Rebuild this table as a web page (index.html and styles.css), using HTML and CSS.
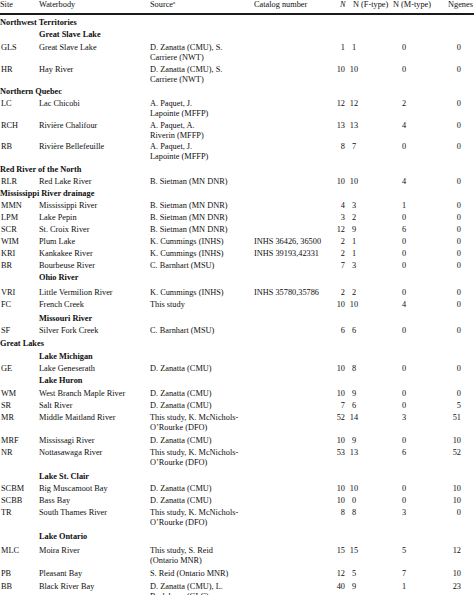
FILE: index.html
```html
<!DOCTYPE html>
<html>
<head>
<meta charset="utf-8">
<link rel="stylesheet" href="styles.css">
</head>
<body>
<table class="tbl">
<colgroup>
<col class="c-site"><col class="c-water"><col class="c-src"><col class="c-cat"><col class="c-n"><col class="c-f"><col class="c-m"><col class="c-g">
</colgroup>
<thead>
<tr>
<th class="h-site">Site</th><th class="h-water">Waterbody</th><th class="h-src">Source<sup>a</sup></th><th class="h-cat">Catalog number</th><th class="h-n"><i>N</i></th><th class="h-f">N (F-type)</th><th class="h-m">N (M-type)</th><th class="h-g">Ngenes</th>
</tr>
</thead>
<tbody>
<tr class="grp p3"><td colspan="8">Northwest Territories</td></tr>
<tr class="sub p2"><td></td><td colspan="7">Great Slave Lake</td></tr>
<tr class="p3"><td>GLS</td><td>Great Slave Lake</td><td>D. Zanatta (CMU), S.<br>Carriere (NWT)</td><td></td><td class="n">1</td><td class="f">1</td><td class="m">0</td><td class="g">0</td></tr>
<tr class="p2"><td>HR</td><td>Hay River</td><td>D. Zanatta (CMU), S.<br>Carriere (NWT)</td><td></td><td class="n">10</td><td class="f">10</td><td class="m">0</td><td class="g">0</td></tr>
<tr class="grp p2"><td colspan="8">Northern Quebec</td></tr>
<tr class="p2"><td>LC</td><td>Lac Chicobi</td><td>A. Paquet, J.<br>Lapointe (MFFP)</td><td></td><td class="n">12</td><td class="f">12</td><td class="m">2</td><td class="g">0</td></tr>
<tr class="p2"><td>RCH</td><td>Rivière Chalifour</td><td>A. Paquet, A.<br>Riverin (MFFP)</td><td></td><td class="n">13</td><td class="f">13</td><td class="m">4</td><td class="g">0</td></tr>
<tr class="p1"><td>RB</td><td>Rivière Bellefeuille</td><td>A. Paquet, J.<br>Lapointe (MFFP)</td><td></td><td class="n">8</td><td class="f">7</td><td class="m">0</td><td class="g">0</td></tr>
<tr class="grp p3"><td colspan="8">Red River of the North</td></tr>
<tr class="p2"><td>RLR</td><td>Red Lake River</td><td>B. Sietman (MN DNR)</td><td></td><td class="n">10</td><td class="f">10</td><td class="m">4</td><td class="g">0</td></tr>
<tr class="grp p2"><td colspan="8">Mississippi River drainage</td></tr>
<tr class="p2"><td>MMN</td><td>Mississippi River</td><td>B. Sietman (MN DNR)</td><td></td><td class="n">4</td><td class="f">3</td><td class="m">1</td><td class="g">0</td></tr>
<tr class="p2"><td>LPM</td><td>Lake Pepin</td><td>B. Sietman (MN DNR)</td><td></td><td class="n">3</td><td class="f">2</td><td class="m">0</td><td class="g">0</td></tr>
<tr class="p2"><td>SCR</td><td>St. Croix River</td><td>B. Sietman (MN DNR)</td><td></td><td class="n">12</td><td class="f">9</td><td class="m">6</td><td class="g">0</td></tr>
<tr class="p2"><td>WIM</td><td>Plum Lake</td><td>K. Cummings (INHS)</td><td>INHS 36426, 36500</td><td class="n">2</td><td class="f">1</td><td class="m">0</td><td class="g">0</td></tr>
<tr class="p2"><td>KRI</td><td>Kankakee River</td><td>K. Cummings (INHS)</td><td>INHS 39193,42331</td><td class="n">2</td><td class="f">1</td><td class="m">0</td><td class="g">0</td></tr>
<tr class="p2"><td>BR</td><td>Bourbeuse River</td><td>C. Barnhart (MSU)</td><td></td><td class="n">7</td><td class="f">3</td><td class="m">0</td><td class="g">0</td></tr>
<tr class="sub p2"><td></td><td colspan="7">Ohio River</td></tr>
<tr class="p5"><td>VRI</td><td>Little Vermilion River</td><td>K. Cummings (INHS)</td><td>INHS 35780,35786</td><td class="n">2</td><td class="f">2</td><td class="m">0</td><td class="g">0</td></tr>
<tr class="p2"><td>FC</td><td>French Creek</td><td>This study</td><td></td><td class="n">10</td><td class="f">10</td><td class="m">4</td><td class="g">0</td></tr>
<tr class="sub p4"><td></td><td colspan="7">Missouri River</td></tr>
<tr class="p2"><td>SF</td><td>Silver Fork Creek</td><td>C. Barnhart (MSU)</td><td></td><td class="n">6</td><td class="f">6</td><td class="m">0</td><td class="g">0</td></tr>
<tr class="grp p3"><td colspan="8">Great Lakes</td></tr>
<tr class="sub p3"><td></td><td colspan="7">Lake Michigan</td></tr>
<tr class="p2"><td>GE</td><td>Lake Geneserath</td><td>D. Zanatta (CMU)</td><td></td><td class="n">10</td><td class="f">8</td><td class="m">0</td><td class="g">0</td></tr>
<tr class="sub p2"><td></td><td colspan="7">Lake Huron</td></tr>
<tr class="p3"><td>WM</td><td>West Branch Maple River</td><td>D. Zanatta (CMU)</td><td></td><td class="n">10</td><td class="f">9</td><td class="m">0</td><td class="g">0</td></tr>
<tr class="p2"><td>SR</td><td>Salt River</td><td>D. Zanatta (CMU)</td><td></td><td class="n">7</td><td class="f">6</td><td class="m">0</td><td class="g">5</td></tr>
<tr class="p2"><td>MR</td><td>Middle Maitland River</td><td>This study, K. McNichols-<br>O’Rourke (DFO)</td><td></td><td class="n">52</td><td class="f">14</td><td class="m">3</td><td class="g">51</td></tr>
<tr class="p3"><td>MRF</td><td>Mississagi River</td><td>D. Zanatta (CMU)</td><td></td><td class="n">10</td><td class="f">9</td><td class="m">0</td><td class="g">10</td></tr>
<tr class="p2"><td>NR</td><td>Nottasawaga River</td><td>This study, K. McNichols-<br>O’Rourke (DFO)</td><td></td><td class="n">53</td><td class="f">13</td><td class="m">6</td><td class="g">52</td></tr>
<tr class="sub p4"><td></td><td colspan="7">Lake St. Clair</td></tr>
<tr class="p2"><td>SCBM</td><td>Big Muscamoot Bay</td><td>D. Zanatta (CMU)</td><td></td><td class="n">10</td><td class="f">10</td><td class="m">0</td><td class="g">10</td></tr>
<tr class="p2"><td>SCBB</td><td>Bass Bay</td><td>D. Zanatta (CMU)</td><td></td><td class="n">10</td><td class="f">0</td><td class="m">0</td><td class="g">10</td></tr>
<tr class="p2"><td>TR</td><td>South Thames River</td><td>This study, K. McNichols-<br>O’Rourke (DFO)</td><td></td><td class="n">8</td><td class="f">8</td><td class="m">3</td><td class="g">0</td></tr>
<tr class="sub p4"><td></td><td colspan="7">Lake Ontario</td></tr>
<tr class="p4"><td>MLC</td><td>Moira River</td><td>This study, S. Reid<br>(Ontario MNR)</td><td></td><td class="n">15</td><td class="f">15</td><td class="m">5</td><td class="g">12</td></tr>
<tr class="p3"><td>PB</td><td>Pleasant Bay</td><td>S. Reid (Ontario MNR)</td><td></td><td class="n">12</td><td class="f">5</td><td class="m">7</td><td class="g">10</td></tr>
<tr class="p3"><td>BB</td><td>Black River Bay</td><td>D. Zanatta (CMU), L.<br>Burlakova (GLC)</td><td></td><td class="n">40</td><td class="f">9</td><td class="m">1</td><td class="g">23</td></tr>
</tbody>
</table>
</body>
</html>
```

FILE: styles.css
```css
html, body {
  margin: 0;
  padding: 0;
  background: #ffffff;
  overflow: hidden;
  width: 474px;
  height: 595px;
}

.tbl {
  table-layout: fixed;
  width: 500px;
  border-collapse: collapse;
  border-spacing: 0;
  font-family: "Liberation Serif", "Times New Roman", serif;
  font-size: 8.3px;
  line-height: 10px;
  color: #0e0e0e;
}

.c-site { width: 39px; }
.c-water { width: 111px; }
.c-src { width: 104px; }
.c-cat { width: 76px; }
.c-n { width: 16px; }
.c-f { width: 47px; }
.c-m { width: 47px; }
.c-g { width: 60px; }

.tbl th {
  font-weight: normal;
  text-align: left;
  vertical-align: top;
  padding: 0 0 3px 0;
  border-bottom: 2px solid #1a1a1a;
  white-space: nowrap;
}

.tbl th sup {
  font-size: 5px;
  line-height: 0;
  vertical-align: 3px;
}

.h-site { padding-left: 0; }
.h-n { padding-left: 10px !important; }
.h-f { padding-left: 7px !important; }
.h-g { padding-left: 8px !important; }

.tbl td {
  padding: 0;
  vertical-align: top;
  white-space: nowrap;
}

.tbl td:first-child { padding-left: 1px; }

.grp td { font-weight: bold; padding-left: 0 !important; }
.sub td { font-weight: bold; }

.p1 td { padding-top: 1px; }
.p2 td { padding-top: 2px; }
.p3 td { padding-top: 3px; }
.p4 td { padding-top: 4px; }
.p5 td { padding-top: 5px; }

.tbl td.n { text-align: right; padding-right: 1px; }
.tbl td.f { text-align: center; padding-right: 31px; }
.tbl td.m { text-align: center; padding-right: 25px; }
.tbl td.g { text-align: right; padding-right: 39px; }
```
